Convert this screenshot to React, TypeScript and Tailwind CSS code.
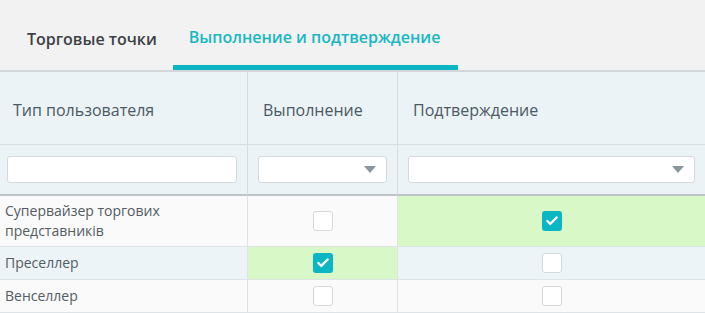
import { Check } from 'lucide-react'

type Row = { name: string[]; exec: boolean; conf: boolean; shade: string }

const rows: Row[] = [
  { name: ['Супервайзер торгових', 'представників'], exec: false, conf: true, shade: 'bg-[#fafafa]' },
  { name: ['Преселлер'], exec: true, conf: false, shade: 'bg-[#ecf4f7]' },
  { name: ['Венселлер'], exec: false, conf: false, shade: 'bg-[#fafafa]' },
]

function Box({ checked }: { checked: boolean }) {
  if (checked) {
    return (
      <div className="flex h-5 w-5 items-center justify-center rounded-[3px] bg-[#0bb6c4]">
        <Check size={14} strokeWidth={4} color="#fff" />
      </div>
    )
  }
  return <div className="h-5 w-5 rounded-[3px] border border-[#d3d9dd] bg-white" />
}

function Select() {
  return (
    <div className="flex h-[27px] w-full items-center justify-end rounded-[3px] border border-[#d3d9dd] bg-white pr-2.5">
      <svg width="12" height="7" viewBox="0 0 12 7">
        <path d="M0 0h12L6 7z" fill="#8a979e" />
      </svg>
    </div>
  )
}

export default function App() {
  return (
    <div className="h-[313px] w-[705px] overflow-hidden bg-[#fafafa] font-['Open_Sans','Liberation_Sans',sans-serif]">
      {/* tabs */}
      <div className="flex h-[72px] items-end border-b-2 border-[#d3d7db] bg-[#f2f2f2]">
        <div className="flex h-full items-center pt-[8px] pl-[27px] pr-[16px] text-[16px] font-semibold text-[#3c4145]">
          Торговые точки
        </div>
        <div className="flex h-full flex-col">
          <div className="flex flex-1 items-center pt-[8px] pl-4 pr-[18px] text-[16px] font-semibold text-[#17b7c3]">
            Выполнение и подтверждение
          </div>
          <div className="h-[5px] bg-[#0bb5c2]" />
        </div>
      </div>

      {/* table */}
      <div className="grid grid-cols-[248px_150px_1fr] text-[#4a5963]">
        <div className="flex h-[73px] items-center border-r border-b border-[#d5dde2] bg-[#ebf3f6] pt-1 pl-[13px] text-[16px]">
          Тип пользователя
        </div>
        <div className="flex h-[73px] items-center border-r border-b border-[#d5dde2] bg-[#ebf3f6] pt-1 pl-[15px] text-[16px]">
          Выполнение
        </div>
        <div className="flex h-[73px] items-center border-b border-[#d5dde2] bg-[#ebf3f6] pt-1 pl-[15px] text-[16px]">
          Подтверждение
        </div>

        <div className="flex h-[51px] items-center border-r border-b-2 border-[#d5dde2] border-b-[#bcc3c9] bg-[#ebf3f6] pl-[7px] pr-[10px]">
          <div className="h-[27px] w-full rounded-[3px] border border-[#d3d9dd] bg-white" />
        </div>
        <div className="flex h-[51px] items-center border-r border-b-2 border-[#d5dde2] border-b-[#bcc3c9] bg-[#ebf3f6] pl-[10px] pr-[10px]">
          <Select />
        </div>
        <div className="flex h-[51px] items-center border-b-2 border-b-[#bcc3c9] bg-[#ebf3f6] pl-[10px] pr-[10px]">
          <Select />
        </div>

        {rows.map((r, i) => {
          const h = r.name.length > 1 ? 'h-[51px]' : 'h-[33px]'
          return (
            <div key={i} className="contents">
              <div className={`flex flex-col justify-center border-r border-b border-[#dde3e7] pl-[5px] text-[14px] leading-[20px] text-[#525c62] ${h} ${r.shade}`}>
                {r.name.map(n => (
                  <span key={n}>{n}</span>
                ))}
              </div>
              <div className={`flex items-center justify-center border-r border-b border-[#dde3e7] ${h} ${r.exec ? 'bg-[#d8f8c8]' : r.shade}`}>
                <Box checked={r.exec} />
              </div>
              <div className={`flex items-center justify-center border-b border-[#dde3e7] ${h} ${r.conf ? 'bg-[#d8f8c8]' : r.shade}`}>
                <Box checked={r.conf} />
              </div>
            </div>
          )
        })}
      </div>
    </div>
  )
}
